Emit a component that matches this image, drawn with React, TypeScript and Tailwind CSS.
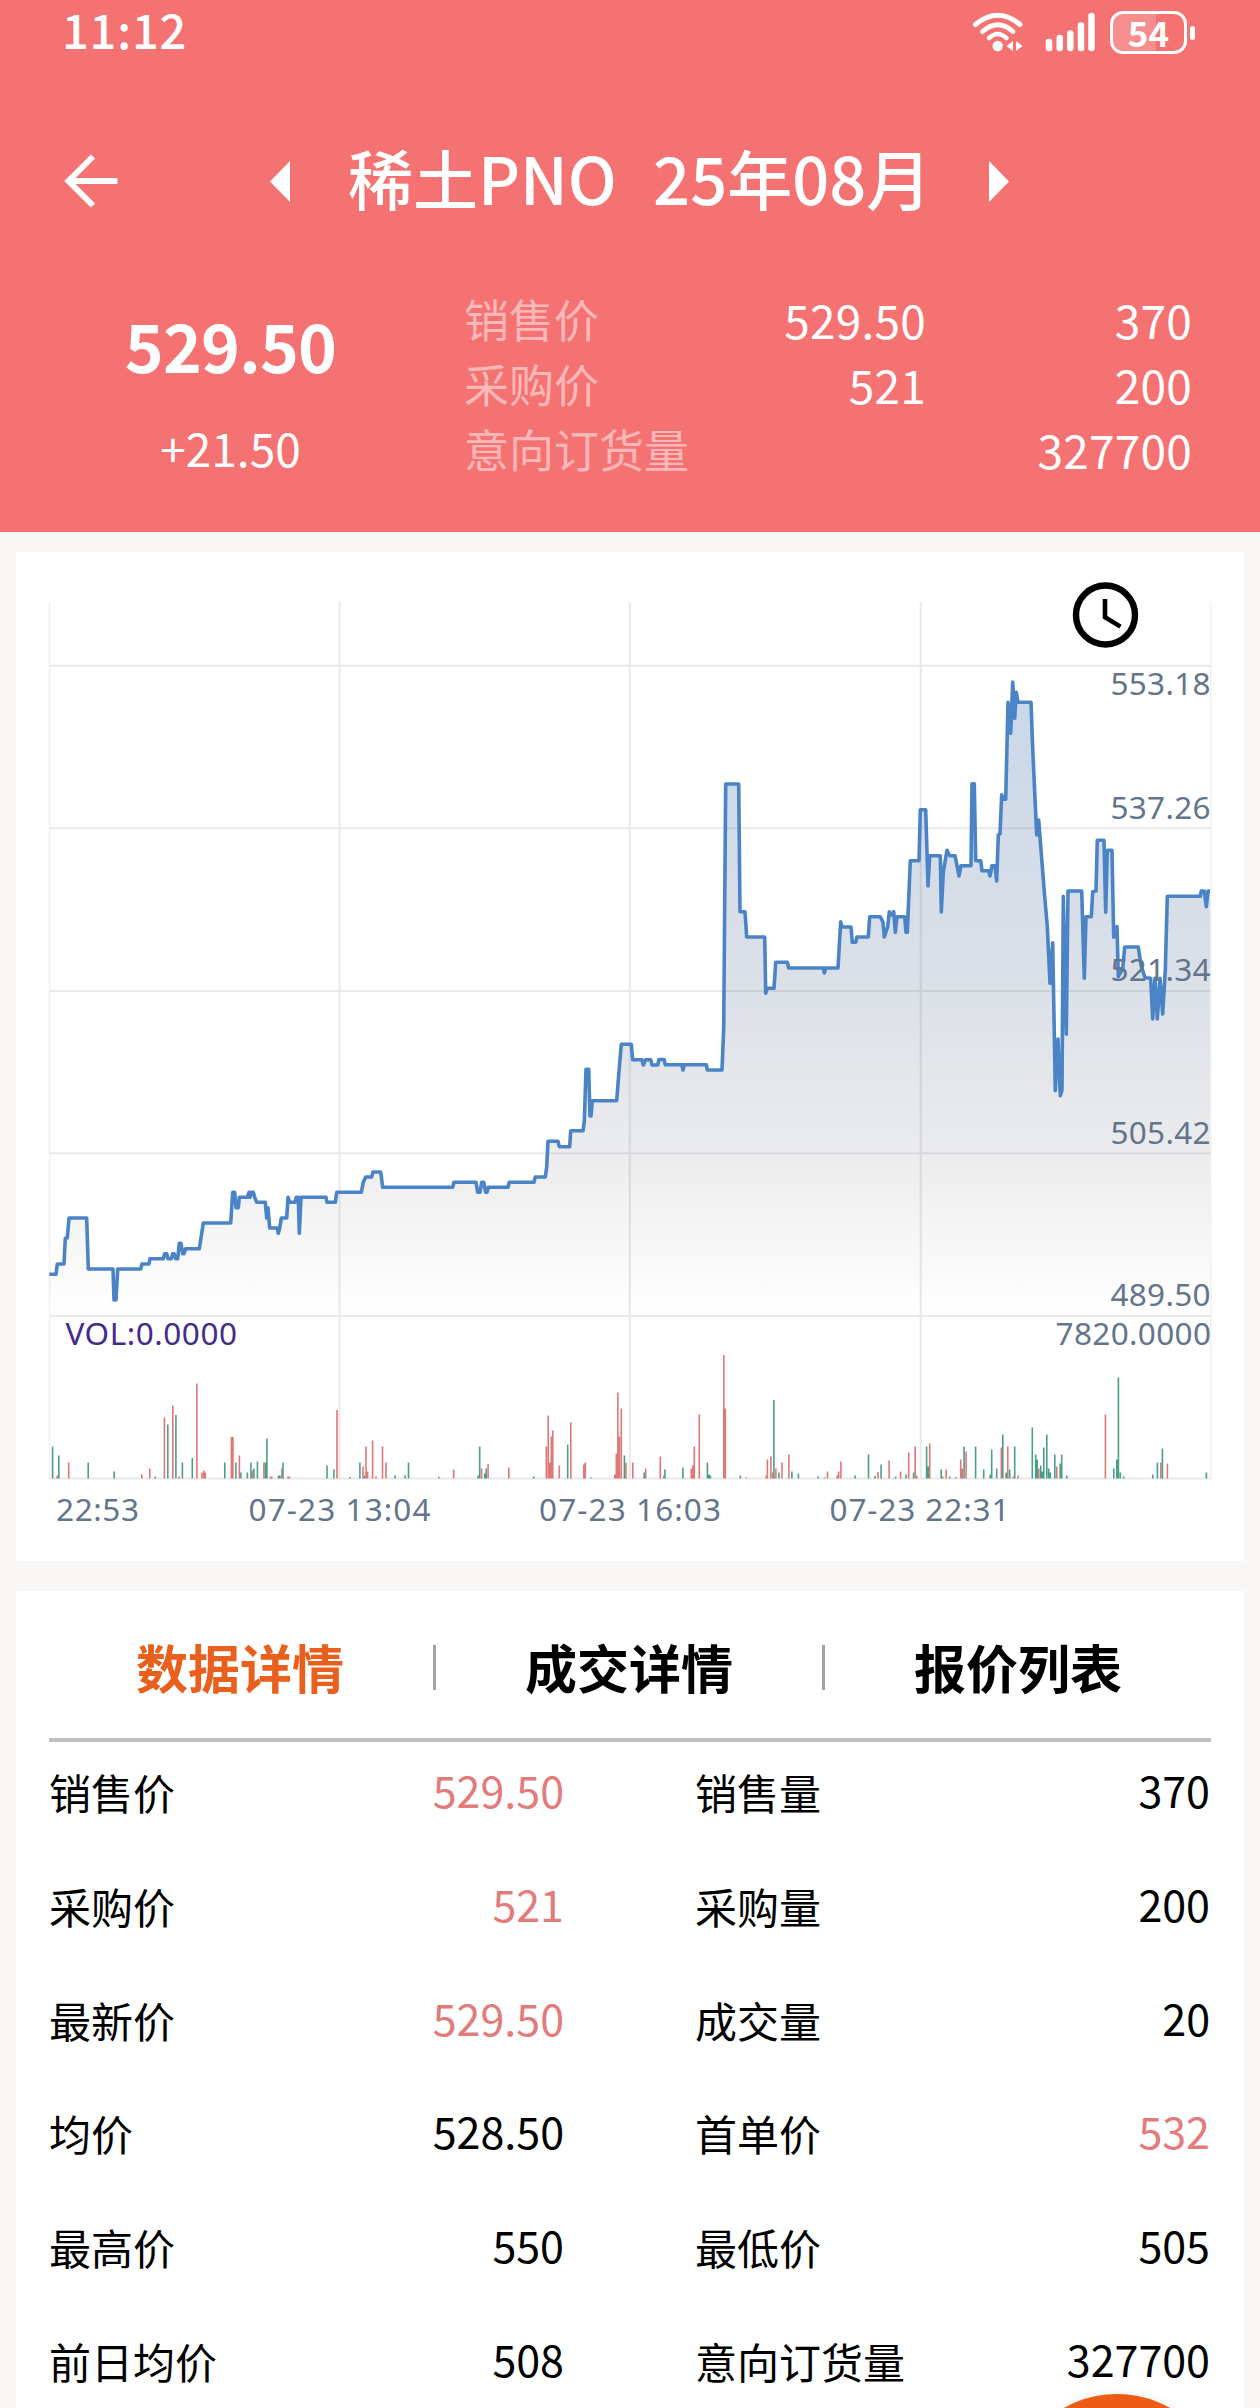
import clsx from "clsx";

interface PricePoint {
  x: number;
  y: number;
}

const LINE_DATA = `
49.3,1274.3 56,1274.3 57.3,1264 64,1264 65.3,1238.3 67.3,1238 69,1218 86.7,1218 88.3,1269 113,1269 114,1300 116,1300
117.7,1269 140.7,1269 142,1264 149,1264 150,1258.7 163.3,1258.7 164.7,1253.7 166.7,1253.7 168,1258.7 171.3,1258.7
172.7,1253.7 174,1253.7 175.7,1258.7 177.7,1258.7 179.3,1243.3 181,1243.3 182.7,1253.7 184,1253.7 185.7,1248.7
199.3,1248.7 203.3,1223 230.7,1223 232.7,1192.3 234.7,1192.3 236,1207.7 238.3,1207.7 239.3,1197.3 247.3,1197.3
249,1192.3 250,1197.3 251.3,1192.3 253.3,1192.3 254.7,1197.3 256.7,1202.3 265.3,1202.3 266.7,1218 268,1207.7
269.7,1228 277.3,1228 278.3,1233.3 279.7,1228 281.3,1218 286.7,1218 288,1197.3 289.7,1202.3 295,1202.3 296.3,1197.3
298.3,1197.3 299.3,1233.3 301,1197.3 326,1197.3 327,1202.3 335.3,1202.3 336.7,1192.3 361.3,1192.3 363.3,1182.2
365.7,1177 371.7,1177 373,1172 380.7,1172 382.7,1187.2 452.7,1187.2 454,1182.2 476,1182.2 477.7,1192.3 480,1192.3
481.7,1182.2 483.7,1182.2 485.7,1192.3 487,1192.3 488.3,1187.2 508,1187.2 509.3,1182.2 534,1182.2 535.3,1177
545.3,1177 546.7,1167 548,1141.3 558,1141.3 559.3,1146.7 569.7,1146.7 570.7,1130.8 583,1130.8 584.3,1121.7
586,1069.3 588.7,1069.3 590,1116 591,1116 592.3,1100.7 616.7,1100.7 618.7,1075 621.3,1044.3 631.3,1044.3
632.7,1059.8 642,1059.8 643.3,1065 645.7,1059.8 650.7,1059.8 652,1065 657.7,1065 659,1059.5 664,1059.5 665.3,1064.7
681.7,1064.7 683,1070 684.3,1064.7 706.3,1064.7 707.3,1070 722,1070 723.7,1028.3 725.7,784 738.7,784 740,911.7
745,911.7 746.7,937 764.7,937 765.7,993.3 767.3,988.3 774,988.3 775.7,962.3 787.3,962.3 788.7,968 823.3,968
824.3,973 825.7,968 838,968 840.7,921.7 842,927 851,927 852.3,942.3 855.7,942.3 857,937 868.3,937 869.7,916.7
880.3,916.7 883,922.3 884.3,937 887.7,926.7 889.3,911.7 891.3,915 893.7,911.7 895.3,932.3 897,916.7 904.7,916.7
906,932.3 907.3,932.3 910.3,860.7 919,860.7 920.3,809.7 925.7,809.7 928,886 929.7,855.7 940.3,855.7 941.3,912
943.3,871.7 947,850.3 949.7,855.7 955,855.7 959,876 961,865.7 971,865.7 972,783.7 974.3,783.7 975.7,860.7
980.7,860.7 982,870.7 988.7,870.7 990,876 992,865.7 995,865.7 996.7,881 998.3,835 1000,834 1001.7,794.7 1003,799.3
1005.7,799.3 1008,702.3 1010.7,733.3 1012.7,682 1014.7,718.3 1016.3,692.3 1018,702.3 1031,702.3 1032.7,748.7
1034,776.7 1036.7,835 1038.7,820 1041,850 1044.7,896.7 1047.3,926.7 1050,983.3 1052.7,942.7 1055.3,1090.7
1058,1039 1060.3,1095.7 1062,1090 1063.3,896.3 1066.3,1034.3 1068,891 1081.7,891 1084.3,978.3 1086,916.7
1091.3,916.7 1092.7,891.7 1096,891 1097.3,840.3 1104,840.3 1105.7,912.3 1107.3,850.3 1112,850.3 1113.7,937.3
1117,926.7 1118.3,976.7 1122.7,968.3 1124.7,947 1138.3,947 1141,965 1145,977.7 1150.7,978.3 1152.7,1019 1155,978.3
1157.3,1019 1160,978.3 1162.7,1014 1165.3,970 1167.3,896.3 1200.3,896.3 1201.3,891 1204.3,891 1206.3,906.7
1208,891 1210,891`;

const points: PricePoint[] = LINE_DATA.trim()
  .split(/\s+/)
  .map((pair) => {
    const [x, y] = pair.split(",").map(Number);
    return { x, y };
  });

const linePath = points.map((p, i) => `${i ? "L" : "M"}${p.x} ${p.y}`).join("");
const areaPath = `${linePath}L1210 1316L49.3 1316Z`;

// x:height pairs, one list per direction
const VOLUME_UP = `57.2:3 68.7:16 141.8:4 149.8:10 164.4:61 172.8:73 179:2 196.9:95 201.9:6 203.8:8 205.3:6 231.4:41.5
232.9:41.5 239.4:23 252.4:8 263.9:16 270.4:2 271.9:2 281.9:10 288:2 289.5:2 337:68.5 363:12 366:32 367.6:7 372.6:38
376:2 382.5:32 386:16 438.8:2 453.7:9 481.6:10 488.1:14.5 508.8:11 546.3:32 548.2:63 549.8:16 551.3:42 552.8:48
559.3:13 570.8:56 583.8:14 585.3:16 614.8:4 616.3:25 617.9:86 619.4:42 621.3:70 625.9:16 632.8:16 645.7:10 660.3:22
663.7:3 691.3:10 692.8:13 694.3:32 699.3:64 723.8:123.5 725.3:70 746.4:1 766.3:3 767.4:19 770.9:22 772.8:6 775.9:10
782:16 788.9:24 827.5:7 837.1:3 838.6:7 840.9:17 878:6.5 889.1:18 900.6:7 908.7:26 915.2:32 916.7:3 929.7:35
942.7:2 946.2:9 955.7:1.5 960.7:19 962.2:10 966.1:27 1001.3:31 1007.8:32 1013:2 1018.1:3 1038.8:10 1056.8:12
1105.4:64 1160.8:16 1167.4:15`;

const VOLUME_DOWN = `52.6:32 58.8:23 88.2:16 114.2:7 155.2:2 167.8:54 175.9:63.5 182.4:16 192.3:20.5 224.8:16 235.9:16
240.9:6 247.4:6 250.9:16 253.9:10 257.4:17 265.4:16 266.9:40 278.4:3 280:3 283:16 327:13 333.9:9 350:1.5 359.9:16
364.5:3 395.1:3 405.1:3 408.5:16 478.2:3 479.7:32 484.7:5 486.2:10 533.7:2 567.7:34 591:1 624.4:23 644.2:6 664.9:9
682.9:11 707.4:16 708.9:4 710.4:3 740.3:3 773.9:78.5 778.9:6 791.9:7 798.4:5 818:2 824.5:1 855.1:3 868.5:24
875:2.5 881.1:14 895.6:2 906:4 913.6:6 926.6:32 928.2:12 941.2:9 949.6:2 964.1:32 975.6:32 983.7:9 990.2:4
991.7:29 996.7:10 1002.8:44 1006.2:6 1009.7:9 1014.7:32 1032.3:51 1035.7:24 1037.2:19 1040.7:13 1042.2:7 1043.8:31
1046.8:44 1048.7:10 1050.3:6 1054.8:24 1060.2:15 1061.7:24 1066.7:3 1113.8:10 1116.8:19 1118.4:101 1120.3:6
1123.7:2 1152.8:4 1157.4:16 1162.4:30 1206.4:6`;

const barsPath = (src: string) =>
  src
    .trim()
    .split(/\s+/)
    .map((bar) => {
      const [x, h] = bar.split(":");
      return `M${x} 1478.5v-${h}`;
    })
    .join("");

const PRICE_LABELS = [
  { text: "553.18", y: 694.5 },
  { text: "537.26", y: 818.7 },
  { text: "521.34", y: 981 },
  { text: "505.42", y: 1143.7 },
  { text: "489.50", y: 1306 },
];

const TIME_LABELS = [
  { text: "22:53", x: 56, width: 83 },
  { text: "07-23 13:04", x: 248.5, width: 182 },
  { text: "07-23 16:03", x: 539, width: 182 },
  { text: "07-23 22:31", x: 829.5, width: 180 },
];

const QUOTES = [
  { label: "销售价", price: "529.50", amount: "370" },
  { label: "采购价", price: "521", amount: "200" },
  { label: "意向订货量", price: "", amount: "327700" },
];

const TABS = ["数据详情", "成交详情", "报价列表"];

const DETAILS = [
  { label: "销售价", value: "529.50", red: true },
  { label: "销售量", value: "370" },
  { label: "采购价", value: "521", red: true },
  { label: "采购量", value: "200" },
  { label: "最新价", value: "529.50", red: true },
  { label: "成交量", value: "20" },
  { label: "均价", value: "528.50" },
  { label: "首单价", value: "532", red: true },
  { label: "最高价", value: "550" },
  { label: "最低价", value: "505" },
  { label: "前日均价", value: "508" },
  { label: "意向订货量", value: "327700" },
];

function StatusBar() {
  return (
    <div className="flex h-14 items-center justify-between pl-[62px] pr-[65px]">
      <span className="pt-[2px] text-[47px] font-medium leading-[56px] tracking-[0.8px]">11:12</span>
      <div className="flex items-center">
        <svg width="56" height="56" viewBox="970 0 56 56" fill="none" stroke="#fff" strokeLinecap="round">
          <path d="M975.5 24.5Q997.7 6 1020 24.5" strokeWidth="5" />
          <path d="M982.5 31.5Q997.7 18 1013 31.5" strokeWidth="4.8" />
          <path d="M989 38Q997.7 30 1006.5 38" strokeWidth="4.5" />
          <circle cx="997.7" cy="46" r="5.2" fill="#fff" stroke="none" />
          <path d="M1013 41v10l-6.500-5zM1016 41v10l6.500-5z" fill="#fff" stroke="none" />
        </svg>
        <svg className="ml-[18px]" width="52" height="56" viewBox="1044 0 52 56" stroke="#fff" strokeWidth="6.5" strokeLinecap="round">
          <path d="M1049 48v-6M1059.7 48v-10M1070.3 48V33.5M1081 48V25.5M1091.5 48V16" />
        </svg>
        <div className="relative ml-[14px] mt-[9px] flex h-[43px] w-[77px] items-center justify-center rounded-[13px] border-[3px] border-white">
          <div className="absolute inset-y-0 left-0 w-[43px] rounded-l-[10px] bg-white/20" />
          <span className="relative pb-[3px] text-[35px] font-bold leading-[37px]">54</span>
        </div>
        <div className="ml-[3px] mt-[9px] h-[14px] w-[5px] rounded-full bg-white" />
      </div>
    </div>
  );
}

function Header() {
  return (
    <header className="h-[532px] bg-[#f57272] text-white">
      <StatusBar />
      <div className="mt-[81px] flex h-[88px] items-center">
        <svg className="ml-[62px]" width="58" height="58" viewBox="62 152 58 58" fill="none" stroke="#fff" strokeWidth="6">
          <path d="M117.5 181H69M93 156.5L68.5 181L93 205.5" />
        </svg>
        <svg className="ml-[150px]" width="20" height="41" viewBox="0 0 20 41" fill="#fff">
          <path d="M20 0v41L0 20.500z" />
        </svg>
        <h1 className="ml-[58px] w-[641px] whitespace-pre pb-2 text-[65px] font-medium leading-[80px] [word-spacing:3.500px]">
          {"稀土PNO  25年08月"}
        </h1>
        <svg width="20" height="41" viewBox="0 0 20 41" fill="#fff">
          <path d="M0 0v41l20-20.500z" />
        </svg>
      </div>
      <div className="mt-[61px] flex">
        <div className="flex w-[461px] flex-col items-center pt-[18px]">
          <span className="text-[66px] font-bold leading-[80px] tracking-[-0.8px]">529.50</span>
          <span className="mt-[33px] text-[46px] leading-[60px]">+21.50</span>
        </div>
        <div className="ml-[3px] w-[729px]">
          {QUOTES.map((quote) => (
            <div key={quote.label} className="flex h-[65px] text-right text-[46px] leading-[67px]">
              <span className="w-[240px] text-left text-[45px] leading-[65px] text-[#fbb8b8]">{quote.label}</span>
              <span className="w-[222px] tracking-[0.2px]">{quote.price}</span>
              <span className="flex-1 pr-px tracking-[0.2px]">{quote.amount}</span>
            </div>
          ))}
        </div>
      </div>
    </header>
  );
}

function PriceChart() {
  return (
    <svg
      className="block font-['Noto_Sans',sans-serif]"
      width="1228"
      height="1009"
      viewBox="16 552 1228 1009"
      fontSize="31.5"
    >
      <defs>
        <linearGradient id="area" gradientUnits="userSpaceOnUse" x1="0" y1="682" x2="0" y2="1316">
          <stop offset="0" stopColor="#2f67ad" stopOpacity="0.26" />
          <stop offset="0.5" stopColor="#344f78" stopOpacity="0.17" />
          <stop offset="0.75" stopColor="#3c4250" stopOpacity="0.1" />
          <stop offset="1" stopColor="#444" stopOpacity="0" />
        </linearGradient>
      </defs>
      <path d="M339.5 602V1479M629.8 602V1479M920.7 602V1479" stroke="#e9e9e9" strokeWidth="2" />
      <path d="M49.5 602V1479M1210.7 602V1479" stroke="#f0f0f0" strokeWidth="1.5" />
      <path
        d="M49 665.7H1211M49 828.3H1211M49 991H1211M49 1153.3H1211M49 1316H1211M49 1478.5H1211"
        stroke="#e9e9e9"
        strokeWidth="2"
      />
      <path d={areaPath} fill="url(#area)" />
      <path d={linePath} fill="none" stroke="#4b84c6" strokeWidth="3.6" strokeLinejoin="round" />
      <path d={barsPath(VOLUME_UP)} stroke="#e07777" strokeWidth="1.6" />
      <path d={barsPath(VOLUME_DOWN)} stroke="#4a9f89" strokeWidth="1.6" />
      <g fill="#64748b">
        {PRICE_LABELS.map((label) => (
          <text key={label.text} x="1110.5" y={label.y} textLength="100">
            {label.text}
          </text>
        ))}
        <text x="1055.5" y="1345" textLength="155.5">
          7820.0000
        </text>
        {TIME_LABELS.map((label) => (
          <text key={label.text} x={label.x} y="1521" textLength={label.width}>
            {label.text}
          </text>
        ))}
      </g>
      <text x="65.5" y="1345" textLength="171.5" fill="#432c8c">
        VOL:0.0000
      </text>
      <g fill="none" stroke="#000">
        <circle cx="1105.5" cy="615" r="29.5" strokeWidth="6.4" />
        <path d="M1105 599v18.3l15.500 9.300" strokeWidth="4.6" />
      </g>
    </svg>
  );
}

function DetailTabs() {
  return (
    <div className="ml-[32px] mr-[34px] flex h-[147px] items-center justify-between pt-[5px]">
      {TABS.map((tab, i) => (
        <div key={tab} className="contents">
          {i > 0 && <div className="h-[45px] w-[3px] bg-[#a3a3a3]" />}
          <button
            className={clsx(
              "w-[384px] pb-px text-center text-[52px] font-bold leading-[60px]",
              i === 0 ? "text-[#e8601c]" : "text-black"
            )}
          >
            {tab}
          </button>
        </div>
      ))}
    </div>
  );
}

export default function App() {
  return (
    <div className="relative h-[2408px] w-[1260px] overflow-hidden bg-[#f8f7f5] font-['Noto_Sans_CJK_SC',sans-serif]">
      <Header />
      <section className="mx-4 mt-5 h-[1009px] bg-white">
        <PriceChart />
      </section>
      <section className="mx-4 mt-[30px] h-[830px] bg-white">
        <DetailTabs />
        <div className="mx-[33px] h-1 bg-[#bfbfbf]" />
        <div className="ml-[33px] grid w-[1161px] grid-cols-[515px_515px] justify-between text-[42px] leading-[60px] text-black">
          {DETAILS.map((item) => (
            <div key={item.label + item.value} className="flex h-[113.8px] justify-between pt-[17px]">
              <span className="pt-[3px]">{item.label}</span>
              <span className={clsx("text-[43px]", item.red && "text-[#e27c7c]")}>{item.value}</span>
            </div>
          ))}
        </div>
      </section>
      <button className="absolute left-[1009px] top-[2394px] h-[216px] w-[216px] rounded-full bg-[#ec5c14] shadow-[0_0_10px_rgba(0,0,0,0.08)]" />
    </div>
  );
}
